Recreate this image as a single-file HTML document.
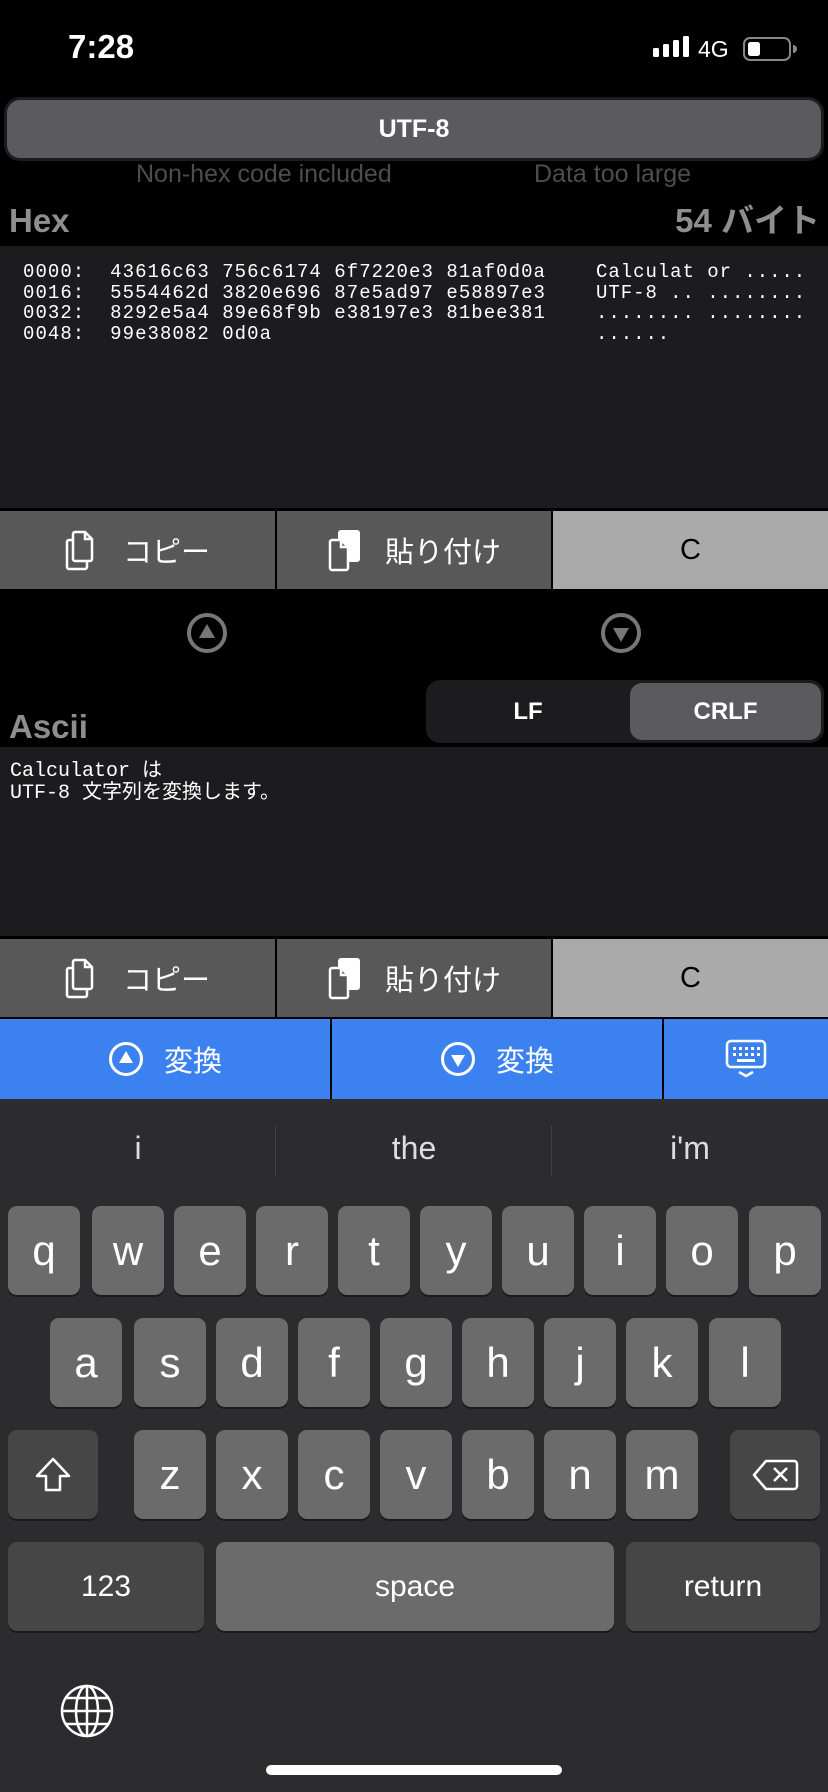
<!DOCTYPE html>
<html><head><meta charset="utf-8"><style>
*{margin:0;padding:0;box-sizing:border-box}
body{width:828px;height:1792px;background:#000;position:relative;overflow:hidden;font-family:"Liberation Sans","Noto Sans CJK JP",sans-serif;color:#fff}
.a{position:absolute}
.mono{font-family:"Liberation Mono","Noto Sans CJK JP",monospace}
.btn{position:absolute;display:flex;align-items:center;justify-content:center;font-size:29px;color:#fff}
.key{position:absolute;background:#6b6b6b;border-radius:9px;box-shadow:0 2px 0 #1a1a1a;display:flex;align-items:center;justify-content:center;font-size:42px;color:#fff;width:72px;height:89px}
.dk{background:#464646}
</style></head><body>
<div class="a" style="left:68px;top:28px;font-size:33px;font-weight:bold">7:28</div>
<svg class="a" style="left:650px;top:34px" width="150" height="30">
<rect x="3" y="14" width="6" height="9" rx="1.5" fill="#fff"/><rect x="13" y="10" width="6" height="13" rx="1.5" fill="#fff"/><rect x="23" y="6" width="6" height="17" rx="1.5" fill="#fff"/><rect x="33" y="2" width="6" height="21" rx="1.5" fill="#fff"/>
<text x="48" y="23" font-size="23" fill="#fff" font-family="Liberation Sans">4G</text>
<rect x="94" y="4" width="46" height="22" rx="6" fill="none" stroke="#888" stroke-width="2"/><rect x="98" y="8" width="12" height="14" rx="2.5" fill="#fff"/><path d="M143 11 v8 a4 4 0 0 0 0 -8z" fill="#888"/>
</svg>
<div class="a" style="left:4px;top:97px;width:820px;height:64px;background:#1c1c1e;border-radius:16px"></div>
<div class="a" style="left:7px;top:100px;width:814px;height:58px;background:#5a5a5f;border-radius:13px;display:flex;align-items:center;justify-content:center;font-size:25px;font-weight:bold">UTF-8</div>
<div class="a" style="left:136px;top:160px;font-size:25px;color:#4d4d4f">Non-hex code included</div>
<div class="a" style="left:534px;top:160px;font-size:25px;color:#4d4d4f">Data too large</div>
<div class="a" style="left:9px;top:202px;font-size:33px;line-height:38px;font-weight:bold;color:#8e8e8e">Hex</div>
<div class="a" style="right:8px;top:202px;font-size:33px;line-height:38px;height:38px;font-weight:bold;color:#8e8e8e">54 バイト</div>
<div class="a" style="left:0;top:246px;width:828px;height:262px;background:#1c1c1e"></div>
<pre class="a mono" style="left:23px;top:262px;font-size:19px;letter-spacing:1.05px;line-height:20.7px;color:#fff">0000:  43616c63 756c6174 6f7220e3 81af0d0a
0016:  5554462d 3820e696 87e5ad97 e58897e3
0032:  8292e5a4 89e68f9b e38197e3 81bee381
0048:  99e38082 0d0a</pre>
<pre class="a mono" style="left:596px;top:262px;font-size:19px;letter-spacing:0.96px;line-height:20.7px;color:#fff">Calculat or .....
UTF-8 .. ........
........ ........
......</pre>
<div class="btn" style="left:0;top:511px;width:275px;height:78px;background:#585858"><svg width="36" height="44" viewBox="0 0 36 44" style="margin-right:22px"><path d="M10 4h10l7 7v20a2 2 0 0 1-2 2H10a2 2 0 0 1-2-2V6a2 2 0 0 1 2-2z M20 4v7h7" fill="none" stroke="#fff" stroke-width="2.5"/><path d="M8 12H4a2 2 0 0 0-2 2v25a2 2 0 0 0 2 2h16a2 2 0 0 0 2-2v-6" fill="none" stroke="#fff" stroke-width="2.5"/></svg>コピー</div>
<div class="btn" style="left:277px;top:511px;width:274px;height:78px;background:#585858"><svg width="36" height="44" viewBox="0 0 36 44" style="margin-right:22px"><rect x="11" y="2" width="22" height="32" rx="3" fill="#fff"/><path d="M3 14a2 2 0 0 1 2-2h9l7 7v21a2 2 0 0 1-2 2H5a2 2 0 0 1-2-2z" fill="#585858" stroke="#fff" stroke-width="2.5"/><path d="M14 12v7h7" fill="none" stroke="#fff" stroke-width="2.5"/></svg>貼り付け</div>
<div class="btn" style="left:553px;top:511px;width:275px;height:78px;background:#aaa;color:#000">C</div>
<svg class="a" style="left:186px;top:612px" width="42" height="42"><circle cx="21" cy="21" r="18" fill="none" stroke="#777" stroke-width="4"/><path d="M21 12l8 14H13z" fill="#777"/></svg>
<svg class="a" style="left:600px;top:612px" width="42" height="42"><circle cx="21" cy="21" r="18" fill="none" stroke="#777" stroke-width="4"/><path d="M21 30l8-14H13z" fill="#777"/></svg>
<div class="a" style="left:426px;top:680px;width:398px;height:63px;background:#1c1c1e;border-radius:14px"></div>
<div class="a" style="left:426px;top:680px;width:204px;height:63px;display:flex;align-items:center;justify-content:center;font-size:24px;font-weight:bold">LF</div>
<div class="a" style="left:630px;top:683px;width:191px;height:57px;background:#5a5a5f;border-radius:12px;display:flex;align-items:center;justify-content:center;font-size:24px;font-weight:bold">CRLF</div>
<div class="a" style="left:9px;top:708px;font-size:33px;font-weight:bold;color:#8e8e8e">Ascii</div>
<div class="a" style="left:0;top:747px;width:828px;height:189px;background:#1c1c1e"></div>
<pre class="a mono" style="left:10px;top:761px;font-size:20px;line-height:22px;color:#fff">Calculator は
UTF-8 文字列を変換します。</pre>
<div class="btn" style="left:0;top:939px;width:275px;height:78px;background:#585858"><svg width="36" height="44" viewBox="0 0 36 44" style="margin-right:22px"><path d="M10 4h10l7 7v20a2 2 0 0 1-2 2H10a2 2 0 0 1-2-2V6a2 2 0 0 1 2-2z M20 4v7h7" fill="none" stroke="#fff" stroke-width="2.5"/><path d="M8 12H4a2 2 0 0 0-2 2v25a2 2 0 0 0 2 2h16a2 2 0 0 0 2-2v-6" fill="none" stroke="#fff" stroke-width="2.5"/></svg>コピー</div>
<div class="btn" style="left:277px;top:939px;width:274px;height:78px;background:#585858"><svg width="36" height="44" viewBox="0 0 36 44" style="margin-right:22px"><rect x="11" y="2" width="22" height="32" rx="3" fill="#fff"/><path d="M3 14a2 2 0 0 1 2-2h9l7 7v21a2 2 0 0 1-2 2H5a2 2 0 0 1-2-2z" fill="#585858" stroke="#fff" stroke-width="2.5"/><path d="M14 12v7h7" fill="none" stroke="#fff" stroke-width="2.5"/></svg>貼り付け</div>
<div class="btn" style="left:553px;top:939px;width:275px;height:78px;background:#aaa;color:#000">C</div>
<div class="btn" style="left:0;top:1019px;width:330px;height:80px;background:#3b82f0"><svg width="36" height="36" style="margin-right:20px"><circle cx="18" cy="18" r="15.5" fill="none" stroke="#fff" stroke-width="3"/><path d="M18 10l7 12H11z" fill="#fff"/></svg>変換</div>
<div class="btn" style="left:332px;top:1019px;width:330px;height:80px;background:#3b82f0"><svg width="36" height="36" style="margin-right:20px"><circle cx="18" cy="18" r="15.5" fill="none" stroke="#fff" stroke-width="3"/><path d="M18 26l7-12H11z" fill="#fff"/></svg>変換</div>
<div class="btn" style="left:664px;top:1019px;width:164px;height:80px;background:#3b82f0"><svg width="42" height="40"><rect x="2" y="2" width="38" height="26" rx="4" fill="none" stroke="#fff" stroke-width="2.5"/><g fill="#fff"><rect x="8" y="8" width="3" height="3"/><rect x="14" y="8" width="3" height="3"/><rect x="20" y="8" width="3" height="3"/><rect x="26" y="8" width="3" height="3"/><rect x="32" y="8" width="3" height="3"/><rect x="8" y="14" width="3" height="3"/><rect x="14" y="14" width="3" height="3"/><rect x="20" y="14" width="3" height="3"/><rect x="26" y="14" width="3" height="3"/><rect x="32" y="14" width="3" height="3"/><rect x="12" y="20" width="18" height="3"/></g><path d="M14 33l7 4 7-4" fill="none" stroke="#fff" stroke-width="2.5"/></svg></div>
<div class="a" style="left:0;top:1099px;width:828px;height:693px;background:#2c2c2e"></div>
<div class="a" style="left:0;top:1130px;width:276px;text-align:center;font-size:32px;color:#ddd">i</div>
<div class="a" style="left:276px;top:1130px;width:276px;text-align:center;font-size:32px;color:#ddd">the</div>
<div class="a" style="left:552px;top:1130px;width:276px;text-align:center;font-size:32px;color:#ddd">i'm</div>
<div class="a" style="left:275px;top:1126px;width:1px;height:50px;background:#444"></div>
<div class="a" style="left:551px;top:1126px;width:1px;height:50px;background:#444"></div>
<div class="key" style="left:8px;top:1206px">q</div><div class="key" style="left:92px;top:1206px">w</div><div class="key" style="left:174px;top:1206px">e</div><div class="key" style="left:256px;top:1206px">r</div><div class="key" style="left:338px;top:1206px">t</div><div class="key" style="left:420px;top:1206px">y</div><div class="key" style="left:502px;top:1206px">u</div><div class="key" style="left:584px;top:1206px">i</div><div class="key" style="left:666px;top:1206px">o</div><div class="key" style="left:749px;top:1206px">p</div>
<div class="key" style="left:50px;top:1318px">a</div><div class="key" style="left:134px;top:1318px">s</div><div class="key" style="left:216px;top:1318px">d</div><div class="key" style="left:298px;top:1318px">f</div><div class="key" style="left:380px;top:1318px">g</div><div class="key" style="left:462px;top:1318px">h</div><div class="key" style="left:544px;top:1318px">j</div><div class="key" style="left:626px;top:1318px">k</div><div class="key" style="left:709px;top:1318px">l</div>
<div class="key dk" style="left:8px;top:1430px;width:90px"><svg width="40" height="40"><path d="M20 4L4 21h9v14h14V21h9z" fill="none" stroke="#fff" stroke-width="2.5" stroke-linejoin="round"/></svg></div>
<div class="key" style="left:134px;top:1430px">z</div><div class="key" style="left:216px;top:1430px">x</div><div class="key" style="left:298px;top:1430px">c</div><div class="key" style="left:380px;top:1430px">v</div><div class="key" style="left:462px;top:1430px">b</div><div class="key" style="left:544px;top:1430px">n</div><div class="key" style="left:626px;top:1430px">m</div>
<div class="key dk" style="left:730px;top:1430px;width:90px"><svg width="48" height="36"><path d="M15 4h28a3 3 0 0 1 3 3v22a3 3 0 0 1-3 3H15L3 18z" fill="none" stroke="#fff" stroke-width="2.5" stroke-linejoin="round"/><path d="M23 11l13 13M36 11L23 24" stroke="#fff" stroke-width="2.5"/></svg></div>
<div class="key dk" style="left:8px;top:1542px;width:196px;font-size:30px">123</div>
<div class="key" style="left:216px;top:1542px;width:398px;font-size:30px">space</div>
<div class="key dk" style="left:626px;top:1542px;width:194px;font-size:30px">return</div>
<svg class="a" style="left:60px;top:1684px" width="54" height="54"><g fill="none" stroke="#fff" stroke-width="2.5"><circle cx="27" cy="27" r="25"/><ellipse cx="27" cy="27" rx="11" ry="25"/><path d="M27 2v50M2 27h50M6 14h42M6 40h42"/></g></svg>
<div class="a" style="left:266px;top:1765px;width:296px;height:10px;border-radius:5px;background:#fff"></div>
</body></html>
